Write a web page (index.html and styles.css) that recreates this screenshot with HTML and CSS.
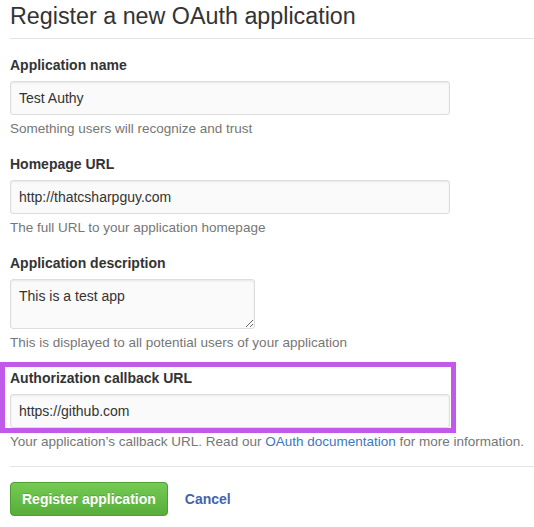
FILE: index.html
```html
<!DOCTYPE html>
<html>
<head>
<meta charset="utf-8">
<link rel="stylesheet" href="styles.css">
</head>
<body>
<div class="page">
  <h2 class="subhead">Register a new OAuth application</h2>
  <form class="form">
    <div class="group">
      <label class="label">Application name</label>
      <input class="field" type="text" value="Test Authy">
      <p class="note">Something users will recognize and trust</p>
    </div>
    <div class="group">
      <label class="label">Homepage URL</label>
      <input class="field" type="text" value="http://thatcsharpguy.com">
      <p class="note">The full URL to your application homepage</p>
    </div>
    <div class="group">
      <label class="label">Application description</label>
      <textarea class="field area">This is a test app</textarea>
      <p class="note">This is displayed to all potential users of your application</p>
    </div>
    <div class="group highlighted">
      <label class="label">Authorization callback URL</label>
      <input class="field" type="text" value="https://github.com">
      <p class="note">Your application’s callback URL. Read our <a class="link" href="#">OAuth documentation</a> for more information.</p>
    </div>
    <div class="actions">
      <button class="btn-primary" type="button">Register application</button>
      <a class="cancel" href="#">Cancel</a>
    </div>
  </form>
</div>
</body>
</html>
```
FILE: styles.css
```css
html, body {
  margin: 0;
  padding: 0;
  background: #fff;
}
body {
  font-family: "Liberation Sans", Arial, sans-serif;
  color: #333;
  overflow: hidden;
}
.page {
  padding: 3px 0 0 10px;
}
.subhead {
  margin: 0;
  font-size: 23.3px;
  font-weight: normal;
  line-height: 27px;
  color: #333;
  padding-bottom: 8px;
  border-bottom: 1px solid #e5e5e5;
}
.form {
  display: flex;
  flex-direction: column;
  padding-top: 16px;
}
.group {
  display: flex;
  flex-direction: column;
  align-items: flex-start;
  margin-bottom: 16px;
  position: relative;
}
.label {
  font-size: 14px;
  font-weight: bold;
  line-height: 20px;
  margin-bottom: 6px;
}
.field {
  box-sizing: border-box;
  width: 440px;
  height: 34px;
  margin: 0;
  padding: 6px 8px;
  font-family: "Liberation Sans", Arial, sans-serif;
  font-size: 14px;
  line-height: 20px;
  color: #333;
  background: #fafafa;
  border: 1px solid #ddd;
  border-radius: 3px;
  box-shadow: inset 0 1px 2px rgba(0,0,0,0.075);
  outline: none;
}
.area {
  width: 245px;
  height: 50px;
  resize: vertical;
  display: block;
}
.note {
  margin: 5px 0 0;
  font-size: 13.5px;
  line-height: 18px;
  color: #767676;
}
.link {
  color: #4078c0;
  text-decoration: none;
}
.highlighted {
  margin-bottom: 15px;
}
.highlighted::after {
  content: "";
  position: absolute;
  left: -10px;
  top: -6px;
  width: 446px;
  height: 61px;
  border: 5px solid #c15ae8;
  pointer-events: none;
}
.actions {
  display: flex;
  align-items: center;
  border-top: 1px solid #e5e5e5;
  padding-top: 15px;
}
.btn-primary {
  box-sizing: border-box;
  height: 34px;
  padding: 0 11px;
  font-family: "Liberation Sans", Arial, sans-serif;
  font-size: 14px;
  font-weight: bold;
  color: #fff;
  background-color: #60b044;
  background-image: linear-gradient(#74cb52, #58ad3b);
  border: 1px solid #4f9d35;
  border-radius: 4px;
  text-shadow: 0 -1px 0 rgba(0,0,0,0.15);
}
.cancel {
  margin-left: 17px;
  font-size: 14px;
  font-weight: bold;
  color: #3f66ae;
  text-decoration: none;
}
```
